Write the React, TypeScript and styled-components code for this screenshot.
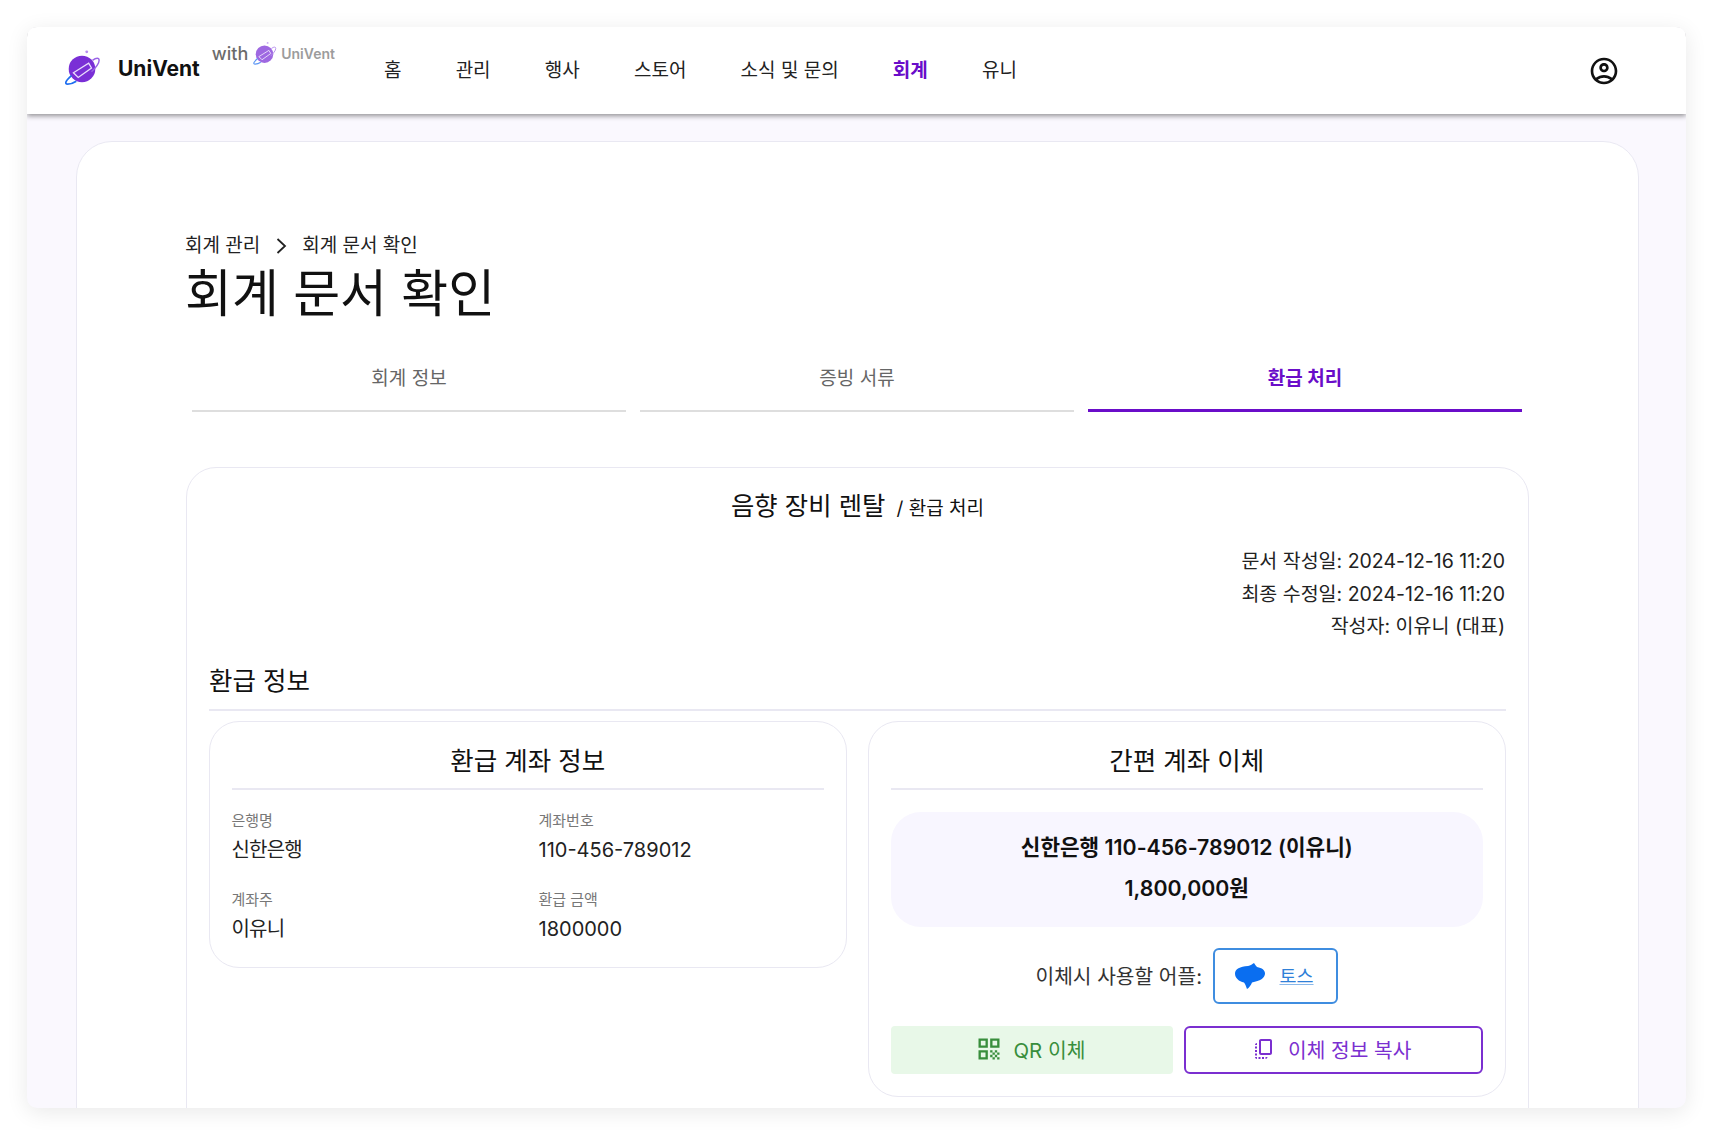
import styled, { createGlobalStyle } from 'styled-components';

const purple = '#6a0dc9';
const line = '#e9e8f2';

const GlobalStyle = createGlobalStyle`
  html, body {
    margin: 0;
    background: #fff;
  }
  body {
    font-family: Inter, "Noto Sans CJK KR", sans-serif;
    color: #1b1b1f;
  }
  * {
    box-sizing: border-box;
  }
`;

const Logo = ({ size }: { size: number }) => (
  <svg width={size} height={size} viewBox="0 0 40 40">
    <circle cx="20" cy="21" r="14" fill="#7a2fd6" />
    <path d="M31 12 C35 9 38 9 38 12 C38 15 34 20 30 24" fill="none" stroke="#9a63e6" strokeWidth="1.5" />
    <path d="M9 28 C3 33 1 37 5 37 C8 37 11 36 14 34" fill="none" stroke="#1f6ff0" strokeWidth="1.8" />
    <path d="M11 25 L27 15 L30 20 L16 30 Z" fill="none" stroke="#e8dcfb" strokeWidth="1.4" />
    <circle cx="25" cy="3" r="1.5" fill="#b78df0" />
  </svg>
);

const ProfileIcon = () => (
  <svg width="32" height="32" viewBox="0 0 24 24" fill="#111">
    <path d="M12 2C6.48 2 2 6.48 2 12s4.48 10 10 10 10-4.48 10-10S17.52 2 12 2zM7.35 18.5C8.66 17.56 10.26 17 12 17s3.34.56 4.65 1.5c-1.31.94-2.91 1.5-4.65 1.5s-3.34-.56-4.65-1.5zm10.79-1.38C16.45 15.8 14.32 15 12 15s-4.45.8-6.14 2.12C4.7 15.73 4 13.95 4 12c0-4.42 3.58-8 8-8s8 3.58 8 8c0 1.95-.7 3.73-1.86 5.12z" />
    <path d="M12 6c-1.93 0-3.5 1.57-3.5 3.5S10.07 13 12 13s3.5-1.57 3.5-3.5S13.93 6 12 6zm0 5c-.83 0-1.5-.67-1.5-1.5S11.17 8 12 8s1.5.67 1.5 1.5S12.83 11 12 11z" />
  </svg>
);

const ChevronIcon = () => (
  <svg width="20" height="20" viewBox="0 0 20 20" fill="none" stroke="#222" strokeWidth="1.8">
    <path d="M6.5 3 L14 10 L6.5 17" />
  </svg>
);

const TossIcon = () => (
  <svg width="32" height="32" viewBox="0 0 32 32" fill="#0a6ef0">
    <path d="M20 3 C21 4.5 22 6 23 7 C28 8 31 10 31 13.5 C31 18 26 21 18 22.5 C17 25 15 28 13 29 C12.3 27 11.5 24.5 10 22.5 C5 21.5 1 18 1 13.5 C1 9 6 6.5 14 6 C16.5 5.5 18.5 4 20 3 Z" />
  </svg>
);

const QrIcon = () => (
  <svg width="28" height="28" viewBox="0 0 24 24" fill="#388e3c">
    <path d="M3 11h8V3H3v8zm2-6h4v4H5V5zM3 21h8v-8H3v8zm2-6h4v4H5v-4zM13 3v8h8V3h-8zm6 6h-4V5h4v4zM19 19h2v2h-2zM13 13h2v2h-2zM15 15h2v2h-2zM13 17h2v2h-2zM15 19h2v2h-2zM17 17h2v2h-2zM17 13h2v2h-2zM19 15h2v2h-2z" />
  </svg>
);

const CopyIcon = () => (
  <svg width="24" height="24" viewBox="0 0 24 24" fill="#7b2fd0">
    <path d="M18 2H9c-1.1 0-2 .9-2 2v12c0 1.1.9 2 2 2h9c1.1 0 2-.9 2-2V4c0-1.1-.9-2-2-2zm0 14H9V4h9v12zM3 15v-2h2v2H3zm0-5.5h2v2H3v-2zM10 20h2v2h-2v-2zm-7-1.5v-2h2v2H3zM5 22c-1.1 0-2-.9-2-2h2v2zm3.5 0h-2v-2h2v2zm5 0v-2h2c0 1.1-.9 2-2 2zM5 6v2H3c0-1.1.9-2 2-2z" />
  </svg>
);

const navItems = ['홈', '관리', '행사', '스토어', '소식 및 문의', '회계', '유니'];
const tabs = ['회계 정보', '증빙 서류', '환급 처리'];
const fields = [
  { label: '은행명', value: '신한은행', hangul: true },
  { label: '계좌번호', value: '110-456-789012' },
  { label: '계좌주', value: '이유니', hangul: true },
  { label: '환급 금액', value: '1800000' },
];

export default function App() {
  return (
    <>
      <GlobalStyle />
      <Page>
        <Frame>
          <Header>
            <Brand>
              <Logo size={38} />
              <BrandName>UniVent</BrandName>
            </Brand>
            <Partner>
              <PartnerWith>with</PartnerWith>
              <Logo size={25} />
              <PartnerName>UniVent</PartnerName>
            </Partner>
            <Nav>
              {navItems.map((item) => (
                <NavItem key={item} $active={item === '회계'}>
                  {item}
                </NavItem>
              ))}
            </Nav>
            <ProfileButton>
              <ProfileIcon />
            </ProfileButton>
          </Header>
          <Main>
            <Sheet>
              <Breadcrumb>
                <span>회계 관리</span>
                <ChevronIcon />
                <span>회계 문서 확인</span>
              </Breadcrumb>
              <PageTitle>회계 문서 확인</PageTitle>
              <Tabs>
                {tabs.map((tab) => (
                  <Tab key={tab} $active={tab === '환급 처리'}>
                    {tab}
                  </Tab>
                ))}
              </Tabs>
              <DocCard>
                <DocTitle>
                  음향 장비 렌탈 <small>/ 환급 처리</small>
                </DocTitle>
                <Meta>
                  <div>문서 작성일: 2024-12-16 11:20</div>
                  <div>최종 수정일: 2024-12-16 11:20</div>
                  <div>작성자: 이유니 (대표)</div>
                </Meta>
                <SectionTitle>환급 정보</SectionTitle>
                <Columns>
                  <SubCard>
                    <SubTitle>환급 계좌 정보</SubTitle>
                    <FieldGrid>
                      {fields.map((field) => (
                        <div key={field.label}>
                          <FieldLabel>{field.label}</FieldLabel>
                          <FieldValue $hangul={field.hangul}>{field.value}</FieldValue>
                        </div>
                      ))}
                    </FieldGrid>
                  </SubCard>
                  <SubCard>
                    <SubTitle>간편 계좌 이체</SubTitle>
                    <Summary>
                      <div>신한은행 110-456-789012 (이유니)</div>
                      <div>1,800,000원</div>
                    </Summary>
                    <AppRow>
                      <AppLabel>이체시 사용할 어플:</AppLabel>
                      <AppButton>
                        <TossIcon />
                        <AppName>토스</AppName>
                      </AppButton>
                    </AppRow>
                    <Actions>
                      <QrButton>
                        <QrIcon />
                        QR 이체
                      </QrButton>
                      <CopyButton>
                        <CopyIcon />
                        이체 정보 복사
                      </CopyButton>
                    </Actions>
                  </SubCard>
                </Columns>
              </DocCard>
            </Sheet>
          </Main>
        </Frame>
      </Page>
    </>
  );
}

const Page = styled.div`
  height: 1134px;
  padding: 27px 27px 26px;
  overflow: hidden;
`;

const Frame = styled.div`
  display: flex;
  flex-direction: column;
  height: 1081px;
  border-radius: 10px;
  overflow: hidden;
  background: #faf8fe;
  box-shadow: 0 4px 22px rgba(0, 0, 0, 0.09);
`;

const Header = styled.header`
  position: relative;
  z-index: 1;
  display: flex;
  align-items: center;
  flex: 0 0 87px;
  padding: 0 66px 5px 36px;
  background: #fff;
  box-shadow: 0 2px 5px rgba(0, 0, 0, 0.42);
`;

const Brand = styled.div`
  display: flex;
  align-items: center;
  gap: 17px;
`;

const BrandName = styled.div`
  font-size: 21px;
  font-weight: 700;
  color: #111;
`;

const Partner = styled.div`
  display: flex;
  align-items: center;
  gap: 4px;
  align-self: flex-start;
  margin: 14px 0 0 12px;
  opacity: 0.72;
`;

const PartnerWith = styled.span`
  font-size: 18px;
  font-weight: 500;
  color: #333;
`;

const PartnerName = styled.span`
  font-size: 14px;
  font-weight: 600;
  color: #777;
`;

const Nav = styled.nav`
  display: flex;
  align-items: center;
  gap: 54.2px;
  margin-left: 49px;
  flex: 1;
`;

const NavItem = styled.div<{ $active?: boolean }>`
  font-size: 19px;
  font-weight: ${(p) => (p.$active ? 700 : 400)};
  color: ${(p) => (p.$active ? purple : '#222')};
`;

const ProfileButton = styled.div`
  display: flex;
  margin-top: 5px;
`;

const Main = styled.main`
  flex: 1;
  min-height: 0;
  padding: 27px 47px 0 49px;
`;

const Sheet = styled.section`
  height: 1100px;
  padding: 90px 109px 0 109px;
  background: #fff;
  border: 1px solid ${line};
  border-radius: 36px;
`;

const Breadcrumb = styled.div`
  display: flex;
  align-items: center;
  gap: 11px;
  margin-left: -1px;
  font-size: 19px;
  line-height: 28px;
  color: #222;
`;

const PageTitle = styled.h1`
  margin: 0 0 0 -1px;
  font-size: 51px;
  font-weight: 400;
  line-height: 68px;
  color: #111;
`;

const Tabs = styled.div`
  display: flex;
  gap: 14px;
  margin: 20px 0 0 6px;
  padding-right: 7px;
`;

const Tab = styled.div<{ $active?: boolean }>`
  flex: 1;
  height: 64px;
  padding-top: 15px;
  text-align: center;
  font-size: 19px;
  font-weight: ${(p) => (p.$active ? 700 : 400)};
  color: ${(p) => (p.$active ? purple : '#666')};
  border-bottom: ${(p) => (p.$active ? `3px solid ${purple}` : '2px solid #dedede')};
`;

const DocCard = styled.div`
  margin-top: 55px;
  height: 700px;
  padding: 19px 22px 0;
  border: 1px solid ${line};
  border-radius: 30px;
`;

const DocTitle = styled.div`
  text-align: center;
  font-size: 25.4px;
  line-height: 38px;
  color: #111;

  small {
    margin-left: 4px;
    font-size: 19px;
  }
`;

const Meta = styled.div`
  margin-top: 17px;
  padding-right: 1px;
  text-align: right;
  font-size: 19.5px;
  line-height: 32.5px;
  color: #222;
`;

const SectionTitle = styled.div`
  margin-top: 19px;
  padding-bottom: 9px;
  font-size: 25.5px;
  line-height: 38px;
  border-bottom: 2px solid ${line};
  color: #111;
`;

const Columns = styled.div`
  display: grid;
  grid-template-columns: 1fr 1fr;
  gap: 21px;
  align-items: start;
  margin-top: 10px;
`;

const SubCard = styled.div`
  padding: 19px 22px 22px 21.5px;
  border: 1px solid ${line};
  border-radius: 30px;
`;

const SubTitle = styled.div`
  padding-bottom: 7px;
  text-align: center;
  font-size: 25.5px;
  line-height: 40px;
  border-bottom: 2px solid ${line};
  color: #111;
`;

const FieldGrid = styled.div`
  display: grid;
  grid-template-columns: 307px 1fr;
  row-gap: 25px;
  margin: 21px 0 1.5px;
`;

const FieldLabel = styled.div`
  font-size: 15px;
  line-height: 20px;
  color: #777;
`;

const FieldValue = styled.div<{ $hangul?: boolean }>`
  margin-top: 4px;
  font-size: 20px;
  line-height: 30px;
  letter-spacing: ${(p) => (p.$hangul ? '-0.8px' : '0')};
  color: #222;
`;

const Summary = styled.div`
  display: flex;
  flex-direction: column;
  align-items: center;
  gap: 11px;
  margin-top: 22px;
  padding: 20px 0 24px;
  border-radius: 30px;
  background: #f8f6ff;
  font-size: 21.3px;
  font-weight: 600;
  line-height: 30px;
  color: #111;
`;

const AppRow = styled.div`
  display: flex;
  align-items: center;
  justify-content: center;
  gap: 11px;
  margin-top: 21px;
  font-size: 20.3px;
  color: #333;
`;

const AppLabel = styled.span`
  padding-bottom: 2px;
`;

const AppButton = styled.div`
  display: flex;
  align-items: center;
  justify-content: center;
  gap: 13px;
  width: 125px;
  height: 56px;
  padding-right: 3px;
  border: 2px solid #3f8de0;
  border-radius: 6px;
`;

const AppName = styled.span`
  padding-bottom: 2px;
  color: #2f80d8;
  font-size: 18.5px;
  text-decoration: underline;
  text-decoration-color: #8ab8ea;
`;

const Actions = styled.div`
  display: grid;
  grid-template-columns: 282px 1fr;
  gap: 11px;
  margin-top: 22px;
`;

const QrButton = styled.div`
  display: flex;
  align-items: center;
  justify-content: center;
  gap: 11px;
  height: 48px;
  padding: 0 3px 2px 0;
  border-radius: 4px;
  background: #e8f8e8;
  color: #388e3c;
  font-size: 20.4px;
`;

const CopyButton = styled.div`
  display: flex;
  align-items: center;
  justify-content: center;
  gap: 12px;
  height: 48px;
  padding: 0 3px 2px 0;
  border: 2px solid #7b2fd0;
  border-radius: 6px;
  color: #7b2fd0;
  font-size: 20.3px;
`;
